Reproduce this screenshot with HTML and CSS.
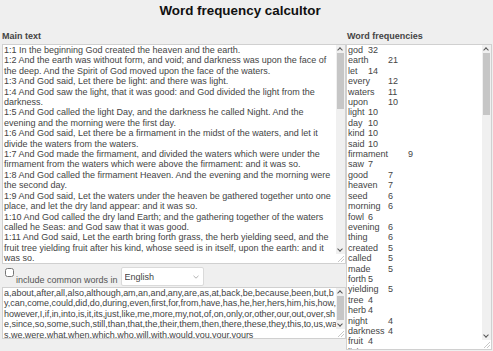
FILE: index.html
```html
<!DOCTYPE html>
<html lang="en">
<head>
    <meta charset="UTF-8">
    <meta name="viewport" content="width=device-width, initial-scale=1.0">
    <title>Word frequency calcultor</title>
    <link rel="stylesheet" href="styles.css">
</head>
<body>
    <h1 class="title">Word frequency calcultor</h1>

    <div class="columns">
        <div class="col-main">
            <label class="col-label" for="mainText">Main text</label>
            <div class="field main-field">
                <textarea id="mainText" class="box" spellcheck="false">1:1 In the beginning God created the heaven and the earth.
1:2 And the earth was without form, and void; and darkness was upon the face of the deep. And the Spirit of God moved upon the face of the waters.
1:3 And God said, Let there be light: and there was light.
1:4 And God saw the light, that it was good: and God divided the light from the darkness.
1:5 And God called the light Day, and the darkness he called Night. And the evening and the morning were the first day.
1:6 And God said, Let there be a firmament in the midst of the waters, and let it divide the waters from the waters.
1:7 And God made the firmament, and divided the waters which were under the firmament from the waters which were above the firmament: and it was so.
1:8 And God called the firmament Heaven. And the evening and the morning were the second day.
1:9 And God said, Let the waters under the heaven be gathered together unto one place, and let the dry land appear: and it was so.
1:10 And God called the dry land Earth; and the gathering together of the waters called he Seas: and God saw that it was good.
1:11 And God said, Let the earth bring forth grass, the herb yielding seed, and the fruit tree yielding fruit after his kind, whose seed is in itself, upon the earth: and it was so.
1:12 And the earth brought forth grass, and herb yielding seed after his kind, and the tree yielding fruit, whose seed was in itself, after his kind: and God saw that it was good.
1:13 And the evening and the morning were the third day.
1:14 And God said, Let there be lights in the firmament of the heaven to divide the day from the night; and let them be for signs, and for seasons, and for days, and years:
1:15 And let them be for lights in the firmament of the heaven to give light upon the earth: and it was so.
1:16 And God made two great lights; the greater light to rule the day, and the lesser light to rule the night: he made the stars also.
1:17 And God set them in the firmament of the heaven to give light upon the earth,
1:18 And to rule over the day and over the night, and to divide the light from the darkness: and God saw that it was good.
1:19 And the evening and the morning were the fourth day.
1:20 And God said, Let the waters bring forth abundantly the moving creature that hath life, and fowl that may fly above the earth in the open firmament of heaven.
1:21 And God created great whales, and every living creature that moveth, which the waters brought forth abundantly, after their kind, and every winged fowl after his kind: and God saw that it was good.
1:22 And God blessed them, saying, Be fruitful, and multiply, and fill the waters in the seas, and let fowl multiply in the earth.
1:23 And the evening and the morning were the fifth day.
1:24 And God said, Let the earth bring forth the living creature after his kind, cattle, and creeping thing, and beast of the earth after his kind: and it was so.
1:25 And God made the beast of the earth after his kind, and cattle after their kind, and every thing that creepeth upon the earth after his kind: and God saw that it was good.
1:26 And God said, Let us make man in our image, after our likeness: and let them have dominion over the fish of the sea, and over the fowl of the air, and over the cattle, and over all the earth, and over every creeping thing that creepeth upon the earth.
1:27 So God created man in his own image, in the image of God created he him; male and female created he them.
1:28 And God blessed them, and God said unto them, Be fruitful, and multiply, and replenish the earth, and subdue it: and have dominion over the fish of the sea, and over the fowl of the air, and over every living thing that moveth upon the earth.
1:29 And God said, Behold, I have given you every herb bearing seed, which is upon the face of all the earth, and every tree, in the which is the fruit of a tree yielding seed; to you it shall be for meat.
1:30 And to every beast of the earth, and to every fowl of the air, and to every thing that creepeth upon the earth, wherein there is life, I have given every green herb for meat: and it was so.
1:31 And God saw every thing that he had made, and, behold, it was very good. And the evening and the morning were the sixth day.</textarea>
                <div class="scrollbar">
                    <span class="arrow up"></span>
                    <div class="track"><div class="thumb" style="height: 56px;"></div></div>
                    <span class="arrow down"></span>
                </div>
                <span class="grip"></span>
            </div>

            <div class="options">
                <label class="include">
                    <input type="checkbox" class="check">
                    <span>include common words in</span>
                </label>
                <div class="lang-wrap">
                    <select class="lang">
                        <option>English</option>
                        <option>French</option>
                        <option>German</option>
                        <option>Spanish</option>
                    </select>
                    <svg class="chevron" width="6" height="4" viewBox="0 0 6 4"><path d="M0.5 0.8 L3 3.2 L5.5 0.8" fill="none" stroke="#aaa" stroke-width="0.9"/></svg>
                </div>
            </div>

            <div class="field common-field">
                <textarea class="box common-words" spellcheck="false">a,about,after,all,also,although,am,an,and,any,are,as,at,back,be,because,been,but,by,can,come,could,did,do,during,even,first,for,from,have,has,he,her,hers,him,his,how,however,I,if,in,into,is,it,its,just,like,me,more,my,not,of,on,only,or,other,our,out,over,she,since,so,some,such,still,than,that,the,their,them,then,there,these,they,this,to,us,was,we,were,what,when,which,who,will,with,would,you,your,yours</textarea>
                <div class="scrollbar">
                    <span class="arrow up"></span>
                    <div class="track"><div class="thumb" style="height: 24px;"></div></div>
                    <span class="arrow down"></span>
                </div>
                <span class="grip"></span>
            </div>
        </div>

        <div class="col-side">
            <label class="col-label" for="freqs">Word frequencies</label>
            <div class="field freq-field">
                <textarea id="freqs" class="box" readonly>god	32
earth	21
let	14
every	12
waters	11
upon	10
light	10
day	10
kind	10
said	10
firmament	9
saw	7
good	7
heaven	7
seed	6
morning	6
fowl	6
evening	6
thing	6
created	5
called	5
made	5
forth	5
yielding	5
tree	4
herb	4
night	4
darkness	4
fruit	4
living	4
creature	4
after	4
lights	4
cattle	3
beast	3
great	3
creepeth	3
divide	3
image	3
face	3
life	3
sea	3
air	3
fish	2
rule	2
multiply	2
blessed	2
dominion	2
fruitful	2
meat	2</textarea>
                <div class="scrollbar">
                    <span class="arrow up"></span>
                    <div class="track"><div class="thumb" style="height: 62px;"></div></div>
                    <span class="arrow down"></span>
                </div>
                <span class="grip"></span>
            </div>
        </div>
    </div>
</body>
</html>
```

FILE: styles.css
```css
* {
    margin: 0;
    padding: 0;
    box-sizing: border-box;
    font-family: "Liberation Sans", Arial, sans-serif;
}

body {
    background-color: #efefef;
    color: #333;
    padding: 0 1px 0 2px;
    height: 351px;
    overflow: hidden;
}

.title {
    font-size: 13.4px;
    font-weight: bold;
    color: #111;
    text-align: center;
    padding: 3px 14px 0 0;
    height: 29px;
}

.columns {
    display: flex;
}

.col-main {
    width: 344px;
    display: flex;
    flex-direction: column;
}

.col-side {
    flex: 1;
    display: flex;
    flex-direction: column;
}

.col-label {
    display: block;
    font-size: 9px;
    font-weight: bold;
    color: #444;
    height: 15px;
    padding-top: 2px;
}

.col-side .col-label {
    padding-left: 1px;
}

/* textarea with a drawn scrollbar on top of it */
.field {
    position: relative;
}

.main-field {
    height: 220px;
}

.common-field {
    height: 52px;
}

.freq-field {
    height: 306px;
}

.box {
    display: block;
    width: 100%;
    height: 100%;
    border: 1px solid #d0d0d0;
    background: white;
    color: #444;
    font-size: 9px;
    line-height: 10.4px;
    padding: 0 10px 0 1px;
    resize: none;
    outline: none;
    overflow: hidden;
    scrollbar-width: none;
    tab-size: 8;
}

.common-words {
    word-break: break-all;
    letter-spacing: -0.03px;
    padding-right: 8px;
}

.scrollbar {
    position: absolute;
    top: 1px;
    right: 1px;
    bottom: 10px;
    width: 9px;
    display: flex;
    flex-direction: column;
    background: #f0f0f0;
}

.track {
    flex: 1;
    padding: 0 1px;
}

.thumb {
    background: #c6c6c6;
}

.arrow {
    display: block;
    height: 8px;
    position: relative;
}

.arrow::before {
    content: "";
    position: absolute;
    left: 2px;
    width: 3px;
    height: 3px;
    border-left: 1px solid #555;
    border-top: 1px solid #555;
}

.arrow.up::before {
    top: 3px;
    transform: rotate(45deg);
}

.arrow.down::before {
    top: 1px;
    transform: rotate(225deg);
}

.grip {
    position: absolute;
    right: 2px;
    bottom: 2px;
    width: 6px;
    height: 6px;
    background: linear-gradient(135deg, transparent 45%, #c8c8c8 45%, #c8c8c8 55%, transparent 55%, transparent 72%, #c8c8c8 72%, #c8c8c8 82%, transparent 82%);
}

.options {
    display: flex;
    align-items: flex-start;
    gap: 3px;
    height: 23px;
    padding: 3px 0 0 1px;
}

.include {
    display: flex;
    align-items: flex-start;
    font-size: 9px;
    color: #555;
    gap: 1px;
}

.include span {
    padding-top: 8px;
}

.check {
    width: 9px;
    height: 9px;
    margin: 1px 1px 0 2px;
}

.lang-wrap {
    position: relative;
}

.lang {
    display: block;
    width: 83px;
    height: 19px;
    border: 1px solid #dadada;
    border-radius: 2px;
    background: white;
    font-size: 9px;
    color: #444;
    padding: 0 3px;
    appearance: none;
    outline: none;
}

.chevron {
    position: absolute;
    right: 5px;
    top: 8px;
}
```
